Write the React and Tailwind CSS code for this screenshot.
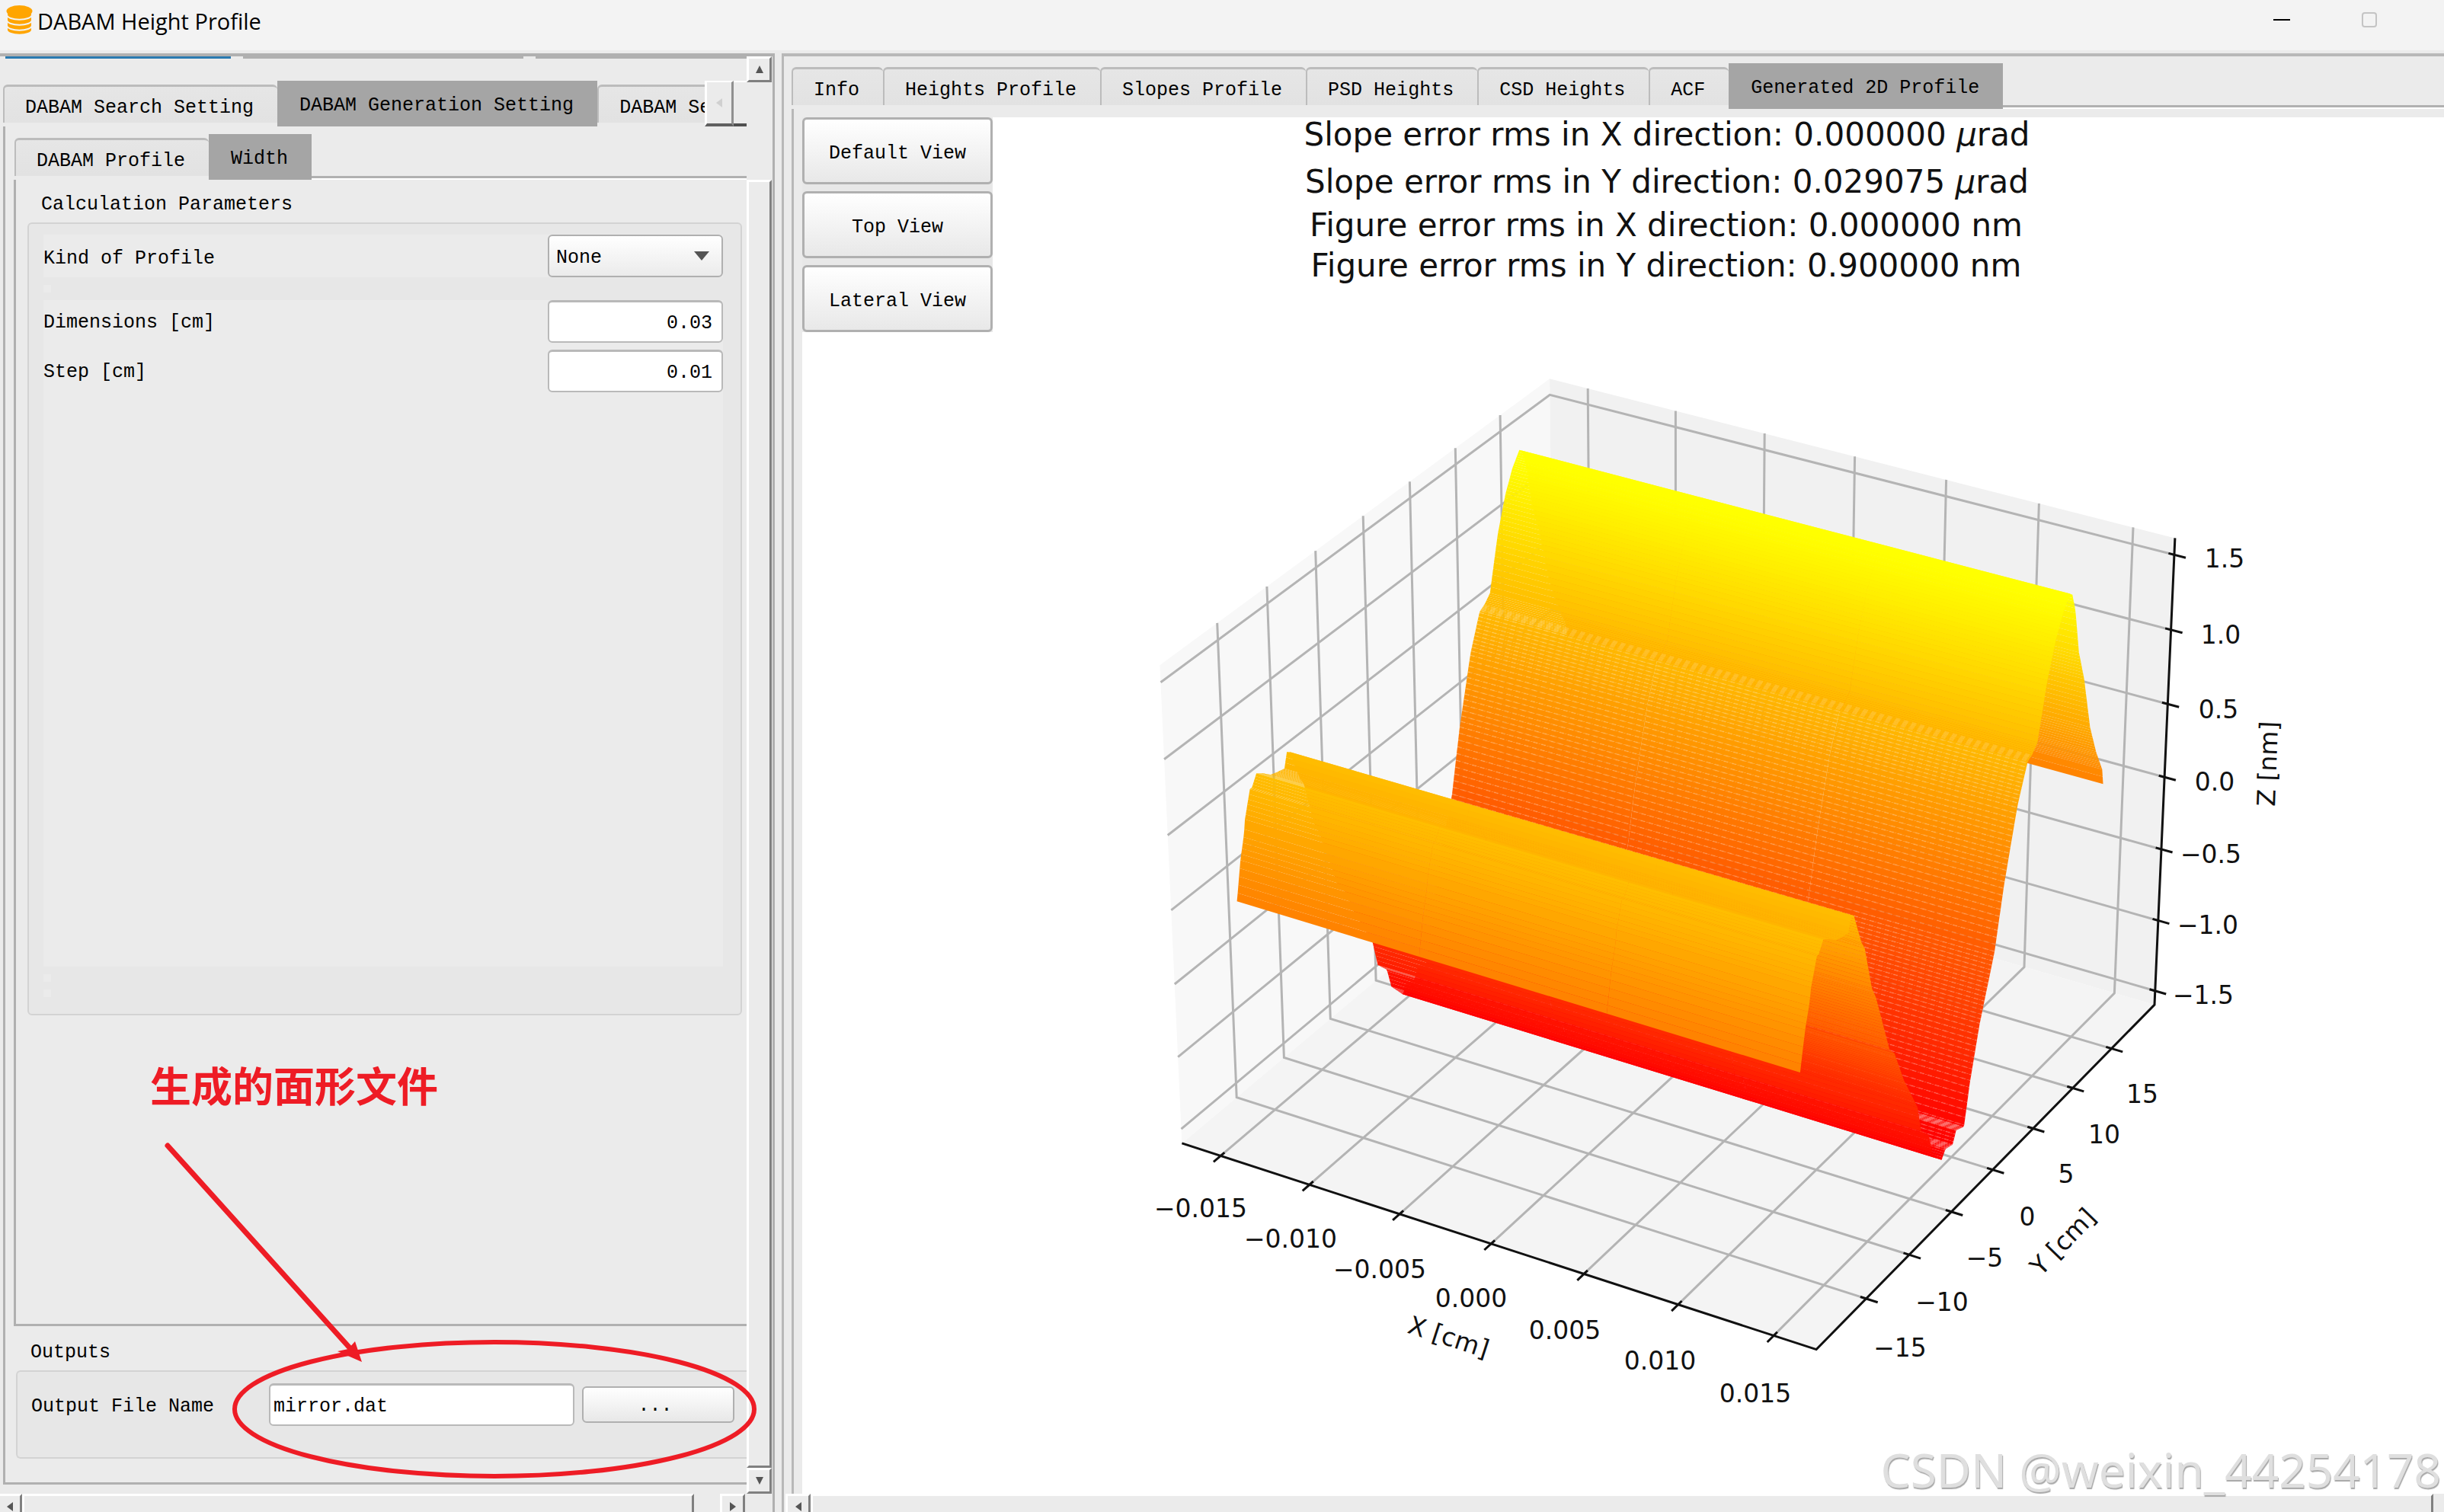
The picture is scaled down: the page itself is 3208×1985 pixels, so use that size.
import { useState } from "react";

const SETTING_TABS = ["DABAM Search Setting", "DABAM Generation Setting"];
const PROFILE_TABS = ["DABAM Profile", "Width"];
const PLOT_TABS = [
  "Info",
  "Heights Profile",
  "Slopes Profile",
  "PSD Heights",
  "CSD Heights",
  "ACF",
  "Generated 2D Profile",
];

// height profile along the mirror: [y in cm, z in nm]
const PROFILE = [
  [-18, 0], [-17.5, 0.25], [-17.05, 0.4], [-16.9, 0.49], [-16.3, 0.66],
  [-16.1, 0.66], [-15.6, 0.73], [-15, 0.7], [-14.2, 0.65], [-13.6, 0.635],
  [-12.8, 0.62], [-12.5, 0.717], [-12.2, 0.7], [-11.3, 0.48], [-10.9, 0.42],
  [-10, 0.11], [-9.5, 0.02], [-7.8, -0.42], [-7.2, -0.48], [-6, -0.73],
  [-5.2, -0.86], [-4.3, -1.01], [-3.8, -1.2], [-2.84, -1.285], [-2.4, -1.43],
  [-1.7, -1.5], [-1.2, -1.55], [-0.76, -1.5], [0.12, -1.52], [0.5, -1.443],
  [1.48, -1.472], [2.07, -1.196], [3.09, -0.85], [4.68, -0.45], [5.66, -0.035],
  [7.03, 0.42], [8.13, 0.657], [8.7, 0.68], [9.3, 0.728], [10.25, 1.08],
  [11.18, 1.313], [12, 1.453], [12.8, 1.54], [13.1, 1.52], [13.55, 1.398],
  [14.2, 1.087], [15, 0.87], [16, 0.497], [16.9, 0.286], [17.8, 0.12], [18, 0.01],
];

// half sizes of the axes box and the data limits it stands for
const BOX = 0.5714;
const BOX_Z = 0.4286;
const X_LIM = 0.0172;
const Y_LIM = 20.65;
const Z_LIM = 1.605;

// camera: elevation 30, azimuth -60, distance 10
const projectBox = (p, q, r) => {
  const depth = 10 - (0.433 * p - 0.75 * q + 0.5 * r);
  const sx = (0.866 * p + 0.5 * q) / depth;
  const sy = (-0.25 * p + 0.433 * q + 0.866 * r) / depth;
  return [2201 + 8350 * sx, 1105 - 8350 * sy];
};

const bx = (x) => (x / X_LIM) * BOX;
const by = (y) => (y / Y_LIM) * BOX;
const bz = (z) => ((z - 0.005) / Z_LIM) * BOX_Z;

const toPoints = (list) =>
  list.map(([x, y]) => `${x.toFixed(1)},${y.toFixed(1)}`).join(" ");

const heightAt = (y) => {
  const i = PROFILE.findIndex((point) => point[0] >= y);
  if (i <= 0) return PROFILE[0][1];
  const [y0, z0] = PROFILE[i - 1];
  const [y1, z1] = PROFILE[i];
  return z0 + ((z1 - z0) * (y - y0)) / (y1 - y0);
};

// back to front, three cells in every strip
const buildSurface = () => {
  const strips = [];
  const xs = [-0.015, -0.005, 0.005, 0.015];
  for (let i = 359; i >= 0; i--) {
    const y0 = -18 + i * 0.1;
    const y1 = y0 + 0.1;
    const z0 = heightAt(y0);
    const z1 = heightAt(Math.min(y1, 18));
    const level = ((z0 + z1) / 2 + 1.53) / 3.03;
    const green = Math.round(255 * Math.min(1, Math.max(0, level)));
    const cells = [0, 1, 2].map((j) =>
      toPoints([
        projectBox(bx(xs[j]), by(y0), bz(z0)),
        projectBox(bx(xs[j + 1]), by(y0), bz(z0)),
        projectBox(bx(xs[j + 1]), by(y1), bz(z1)),
        projectBox(bx(xs[j]), by(y1), bz(z1)),
      ])
    );
    // the seams shine through on the slope that faces the camera
    const seam =
      y0 > -1 && y0 < 8.6
        ? toPoints([
            projectBox(bx(-0.015), by(y1), bz(z1)),
            projectBox(bx(0.015), by(y1), bz(z1)),
          ])
        : null;
    strips.push({ key: i, fill: `rgb(255,${green},0)`, cells, seam });
  }
  return strips;
};

const SURFACE = buildSurface();

const X_TICKS = [
  { value: -0.015, label: "−0.015", x: 1576, y: 1598 },
  { value: -0.01, label: "−0.010", x: 1694, y: 1638 },
  { value: -0.005, label: "−0.005", x: 1811, y: 1678 },
  { value: 0, label: "0.000", x: 1931, y: 1716 },
  { value: 0.005, label: "0.005", x: 2054, y: 1758 },
  { value: 0.01, label: "0.010", x: 2179, y: 1798 },
  { value: 0.015, label: "0.015", x: 2304, y: 1841 },
];
const Y_TICKS = [
  { value: -15, label: "−15", x: 2494, y: 1781 },
  { value: -10, label: "−10", x: 2549, y: 1721 },
  { value: -5, label: "−5", x: 2605, y: 1663 },
  { value: 0, label: "0", x: 2661, y: 1609 },
  { value: 5, label: "5", x: 2712, y: 1553 },
  { value: 10, label: "10", x: 2762, y: 1501 },
  { value: 15, label: "15", x: 2812, y: 1448 },
];
const Z_TICKS = [
  { value: 1.5, label: "1.5", x: 2920, y: 745 },
  { value: 1, label: "1.0", x: 2915, y: 845 },
  { value: 0.5, label: "0.5", x: 2912, y: 943 },
  { value: 0, label: "0.0", x: 2907, y: 1038 },
  { value: -0.5, label: "−0.5", x: 2902, y: 1133 },
  { value: -1, label: "−1.0", x: 2898, y: 1226 },
  { value: -1.5, label: "−1.5", x: 2892, y: 1318 },
];

const A = BOX;
const C = BOX_Z;
const PANES = [
  { fill: "#f8f8f8", corners: [[-A, -A, -C], [-A, A, -C], [-A, A, C], [-A, -A, C]] },
  { fill: "#f1f1f1", corners: [[-A, A, -C], [A, A, -C], [A, A, C], [-A, A, C]] },
  { fill: "#f4f4f4", corners: [[-A, -A, -C], [A, -A, -C], [A, A, -C], [-A, A, -C]] },
];

const GRID = [
  ...X_TICKS.map(({ value }) => [[bx(value), -A, -C], [bx(value), A, -C], [bx(value), A, C]]),
  ...Y_TICKS.map(({ value }) => [[A, by(value), -C], [-A, by(value), -C], [-A, by(value), C]]),
  ...Z_TICKS.map(({ value }) => [[-A, -A, bz(value)], [-A, A, bz(value)], [A, A, bz(value)]]),
];

const AXIS_LINES = [
  [[-A, -A, -C], [A, -A, -C], [A, A, -C], [A, A, C]],
  ...X_TICKS.map(({ value }) => [[bx(value), -A - 0.02, -C], [bx(value), -A + 0.011, -C]]),
  ...Y_TICKS.map(({ value }) => [[A - 0.01, by(value), -C], [A + 0.02, by(value), -C]]),
  ...Z_TICKS.map(({ value }) => [[A - 0.01, A, bz(value)], [A + 0.02, A, bz(value)]]),
];

const linePoints = (line) => toPoints(line.map((corner) => projectBox(...corner)));

function ProfilePlot() {
  return (
    <svg
      viewBox="1303 154 1905 1807"
      className="h-full w-full overflow-visible font-['DejaVu_Sans',sans-serif]"
      role="img"
      aria-label="Generated 2D Profile"
    >
      <g fontSize="42" textAnchor="middle" fill="#111">
        <text x="2188" y="191">
          Slope error rms in X direction: 0.000000 <tspan fontStyle="italic">μ</tspan>rad
        </text>
        <text x="2188" y="253">
          Slope error rms in Y direction: 0.029075 <tspan fontStyle="italic">μ</tspan>rad
        </text>
        <text x="2187" y="310">Figure error rms in X direction: 0.000000 nm</text>
        <text x="2187" y="363">Figure error rms in Y direction: 0.900000 nm</text>
      </g>
      {PANES.map(({ fill, corners }) => (
        <polygon key={fill} points={linePoints(corners)} fill={fill} />
      ))}
      <g fill="none" stroke="#b4b4b4" strokeWidth="3">
        {GRID.map((line, i) => (
          <polyline key={i} points={linePoints(line)} />
        ))}
      </g>
      <g fill="none" stroke="#111" strokeWidth="3">
        {AXIS_LINES.map((line, i) => (
          <polyline key={i} points={linePoints(line)} />
        ))}
      </g>
      {SURFACE.map(({ key, fill, cells, seam }) => (
        <g key={key}>
          {cells.map((points) => (
            <polygon key={points} points={points} fill={fill} />
          ))}
          {seam && (
            <polyline
              points={seam}
              fill="none"
              stroke="#fff"
              strokeOpacity="0.15"
              strokeWidth="2"
              strokeDasharray="6 5"
            />
          )}
        </g>
      ))}
      <g fontSize="33" textAnchor="middle" fill="#111">
        {[...X_TICKS, ...Y_TICKS, ...Z_TICKS].map(({ label, x, y }) => (
          <text key={`${x}-${y}`} x={x} y={y}>
            {label}
          </text>
        ))}
        <text transform="translate(1898 1766) rotate(18)">X [cm]</text>
        <text transform="translate(2716 1638) rotate(-46)">Y [cm]</text>
        <text transform="translate(2988 1003) rotate(-88)">Z [nm]</text>
      </g>
    </svg>
  );
}

function Tab({ label, active, onClick }) {
  return (
    <button
      type="button"
      role="tab"
      aria-selected={active}
      onClick={onClick}
      className={
        active
          ? "flex h-[60px] shrink-0 items-start bg-[#a5a5a5] pt-[18px] pr-[31px] pl-[29px] whitespace-nowrap"
          : "mt-[5px] flex h-[50px] shrink-0 items-start rounded-t-md border-t-3 border-l-2 border-[#bcbcbc] bg-linear-to-b from-[#e6e6e6] to-[#e2e2e2] pr-[31px] pl-[27px] pt-[13px] whitespace-nowrap"
      }
    >
      {label}
    </button>
  );
}

function Arrow({ direction }) {
  const shapes = {
    up: "M6 1 L11 11 L1 11 Z",
    down: "M1 1 L11 1 L6 11 Z",
    left: "M10 0 L10 12 L2 6 Z",
    right: "M2 0 L2 12 L10 6 Z",
  };
  return (
    <svg viewBox="0 0 12 12" className="h-3 w-3 fill-current" aria-hidden="true">
      <path d={shapes[direction]} />
    </svg>
  );
}

function ScrollButton({ direction }) {
  return (
    <button
      type="button"
      aria-label={`Scroll ${direction}`}
      className="flex h-[34px] w-[33px] shrink-0 items-center justify-center border-t-3 border-r-3 border-b-3 border-l-3 border-t-white border-r-[#808080] border-b-[#808080] border-l-white bg-[#ebebeb] text-[#555]"
    >
      <Arrow direction={direction} />
    </button>
  );
}

function NumberRow({ id, label, value, onChange }) {
  return (
    <div className="flex items-end justify-between">
      <label htmlFor={id} className="pb-[11px]">
        {label}
      </label>
      <input
        id={id}
        value={value}
        onChange={(e) => onChange(e.target.value)}
        className="h-14 w-[230px] rounded-md border-2 border-t-3 border-[#b9b9b9] bg-white px-3 pt-[3px] text-right"
      />
    </div>
  );
}

// red marker drawn over the output file row
function Annotation() {
  return (
    <div className="pointer-events-none absolute bottom-0 left-[190px] text-[#ee1c25]">
      <p className="pb-[6px] pl-[7px] font-['Noto_Sans_CJK_SC',sans-serif] text-[54px] leading-[80px] font-bold">
        生成的面形文件
      </p>
      <svg viewBox="190 1470 820 491" className="h-[491px] w-[820px]" aria-hidden="true">
        <path d="M220 1504 L464 1775" stroke="currentColor" strokeWidth="7" strokeLinecap="round" />
        <path d="M475 1788 L443 1774 L457 1771 L466 1761 Z" fill="currentColor" />
        <ellipse cx="649" cy="1850" rx="341" ry="88" fill="none" stroke="currentColor" strokeWidth="6" />
      </svg>
    </div>
  );
}

function SettingsPanel() {
  const [tab, setTab] = useState(SETTING_TABS[1]);
  const [profileTab, setProfileTab] = useState("Width");
  const [kind, setKind] = useState("None");
  const [dimensions, setDimensions] = useState("0.03");
  const [step, setStep] = useState("0.01");
  const [fileName, setFileName] = useState("mirror.dat");

  return (
    <aside className="flex w-[1017px] shrink-0 flex-col border-t-4 border-r-3 border-[#b0b0b0]">
      <div className="relative flex min-h-0 flex-1">
        <div className="flex w-[980px] flex-col">
          <div className="flex h-[3px] gap-4 pl-[7px]">
            <div className="w-[296px] bg-[#2a7ab0]" />
            <div className="w-[368px] bg-[#b0b0b0]" />
            <div className="flex-1 bg-[#b0b0b0]" />
          </div>
          <div role="tablist" className="mt-[29px] ml-[4px] flex overflow-hidden">
            {SETTING_TABS.map((name) => (
              <Tab key={name} label={name} active={tab === name} onClick={() => setTab(name)} />
            ))}
            <div className="w-[141px] overflow-hidden">
              <Tab label="DABAM Setting" active={false} />
            </div>
            <button
              type="button"
              aria-label="Previous tabs"
              className="flex h-[60px] w-[38px] items-center justify-center border-t-2 border-r-3 border-b-4 border-l-3 border-t-white border-r-[#909090] border-b-[#606060] border-l-white text-[#d0d0d0]"
            >
              <Arrow direction="left" />
            </button>
            <div className="h-[60px] flex-1 border-t-2 border-b-4 border-t-white border-b-[#505050]" />
          </div>

          <div className="mb-3 ml-[4px] flex min-h-0 flex-1 flex-col border-b-3 border-l-3 border-[#b0b0b0]">
            <div role="tablist" className="mt-[10px] ml-[12px] flex">
              {PROFILE_TABS.map((name) => (
                <Tab
                  key={name}
                  label={name}
                  active={profileTab === name}
                  onClick={() => setProfileTab(name)}
                />
              ))}
              <div className="h-[5px] flex-1 self-end border-t-3 border-b-2 border-t-[#b0b0b0] border-b-white" />
            </div>

            <div className="ml-[11px] flex min-h-0 flex-1 flex-col border-b-3 border-l-3 border-[#b0b0b0] pr-[6px] pl-[15px]">
              <h2 className="mt-[18px] ml-[18px]">Calculation Parameters</h2>
              <div
                role="group"
                aria-label="Calculation Parameters"
                className="mt-2 flex min-h-[1041px] flex-col rounded-md border-2 border-[#d3d3d3] bg-[#e7e7e7] pt-[14px] pr-[23px] pb-[22px] pl-[19px]"
              >
                <div className="flex items-end justify-between bg-[#ebebeb]">
                  <label htmlFor="kind" className="pb-[9px]">
                    Kind of Profile
                  </label>
                  <div className="relative">
                    <select
                      id="kind"
                      value={kind}
                      onChange={(e) => setKind(e.target.value)}
                      className="h-14 w-[230px] appearance-none rounded-md border-2 border-[#b0b0b0] bg-linear-to-b from-white to-[#ebebeb] px-[9px] pt-[6px]"
                    >
                      <option>None</option>
                      <option>Gaussian</option>
                      <option>Fractal</option>
                    </select>
                    <svg
                      viewBox="0 0 20 12"
                      className="pointer-events-none absolute top-[22px] right-[18px] h-3 w-5"
                      aria-hidden="true"
                    >
                      <path d="M0 0 H20 L10 12 Z" fill="#555" />
                    </svg>
                  </div>
                </div>
                <div className="my-[10px] h-[10px] w-[10px] bg-[#ebebeb]" />
                <div className="flex flex-1 flex-col gap-[9px] bg-[#ebebeb]">
                  <NumberRow
                    id="dimensions"
                    label="Dimensions [cm]"
                    value={dimensions}
                    onChange={setDimensions}
                  />
                  <NumberRow id="step" label="Step [cm]" value={step} onChange={setStep} />
                </div>
                <div className="mt-[10px] h-[10px] w-[10px] bg-[#ebebeb]" />
                <div className="mt-[10px] h-[10px] w-[10px] bg-[#ebebeb]" />
              </div>
            </div>

            <h2 className="mt-[20px] ml-[33px]">Outputs</h2>
            <div
              role="group"
              aria-label="Outputs"
              className="mt-2 mb-[31px] ml-[14px] flex h-[116px] items-start rounded-l-md border-2 border-r-0 border-[#d3d3d3] bg-[#e7e7e7] pt-[15px] pr-[16px] pl-[18px]"
            >
              <label htmlFor="file-name" className="w-[312px] pt-4">
                Output File Name
              </label>
              <input
                id="file-name"
                value={fileName}
                onChange={(e) => setFileName(e.target.value)}
                className="h-14 min-w-0 flex-1 rounded-md border-2 border-t-3 border-[#b9b9b9] bg-white px-[4px] pt-[3px]"
              />
              <button
                type="button"
                aria-label="Choose output file"
                className="mt-1 ml-[10px] h-12 w-[200px] rounded-md border-2 border-[#b0b0b0] bg-linear-to-b from-white to-[#e8e8e8] pt-1 pr-2"
              >
                ...
              </button>
            </div>
          </div>
        </div>

        <div className="flex w-[33px] flex-col">
          <ScrollButton direction="up" />
          <div className="h-[128px]" />
          <div className="flex-1 border-t-3 border-r-3 border-b-3 border-l-3 border-t-white border-r-[#808080] border-b-[#808080] border-l-white" />
          <ScrollButton direction="down" />
        </div>
        <Annotation />
      </div>

      <div className="flex h-6 overflow-hidden">
        <div className="-ml-1">
          <ScrollButton direction="left" />
        </div>
        <div className="h-[34px] flex-1 border-t-3 border-r-3 border-l-3 border-t-white border-r-[#808080] border-l-white" />
        <div className="mr-[36px] ml-[34px]">
          <ScrollButton direction="right" />
        </div>
      </div>
    </aside>
  );
}

function PlotPanel() {
  const [tab, setTab] = useState("Generated 2D Profile");
  const views = ["Default View", "Top View", "Lateral View"];

  return (
    <main className="ml-[9px] flex min-w-0 flex-1 flex-col border-t-4 border-l-3 border-[#b8b8b8]">
      <div role="tablist" className="mt-[9px] ml-[10px] flex">
        {PLOT_TABS.map((name) => (
          <Tab key={name} label={name} active={tab === name} onClick={() => setTab(name)} />
        ))}
        <div className="h-[5px] flex-1 self-end border-t-3 border-b-2 border-t-[#b0b0b0] border-b-white" />
      </div>
      <section className="ml-[10px] flex min-h-0 flex-1 border-l-3 border-[#b8b8b8] pt-[11px] pl-[11px]">
        <div className="flex min-w-0 flex-1 bg-white">
          <div className="flex w-[250px] shrink-0 flex-col gap-[9px] self-start bg-[#e8e8e8]">
            {views.map((view) => (
              <button
                key={view}
                type="button"
                className="h-[88px] rounded-md border-3 border-[#b0b0b0] bg-linear-to-b from-white to-[#e8e8e8] pt-2"
              >
                {view}
              </button>
            ))}
          </div>
          <div className="min-h-0 min-w-0 flex-1">
            <ProfilePlot />
          </div>
        </div>
      </section>
      <div className="ml-[2px] flex h-6 overflow-hidden">
        <ScrollButton direction="left" />
        <div className="mr-[14px] h-[34px] flex-1 border-t-3 border-r-3 border-l-3 border-t-white border-r-[#808080] border-l-white" />
      </div>
    </main>
  );
}

function TitleBar() {
  return (
    <header className="flex h-[66px] shrink-0 items-start justify-between bg-[#f3f3f3]">
      <div className="flex items-start pt-[7px] pl-2">
        <svg viewBox="0 0 35 39" className="h-[39px] w-[35px]" aria-hidden="true">
          <g fill="#ffa500" stroke="#f3f3f3" strokeWidth="2">
            <path d="M1 27 V32 C1 41 34 41 34 32 V27 Z" />
            <path d="M1 20 V26 C1 35 34 35 34 26 V20 Z" />
            <path d="M1 13 V19 C1 28 34 28 34 19 V13 Z" />
            <path d="M1 7 V12 C1 21 34 21 34 12 V7 Z" />
            <ellipse cx="17.5" cy="7.5" rx="17" ry="7.5" strokeWidth="0" />
          </g>
        </svg>
        <h1 className="ml-[6px] font-['Open_Sans',sans-serif] text-[29px] leading-[42px]">
          DABAM Height Profile
        </h1>
      </div>
      <div className="flex gap-[94px] pt-4 pr-[88px]">
        <button type="button" aria-label="Minimize" className="flex h-5 w-[22px] items-center">
          <span className="h-[2px] w-full bg-black" />
        </button>
        <button
          type="button"
          aria-label="Maximize"
          className="h-5 w-5 rounded-sm border-2 border-[#c4c4c4]"
        />
      </div>
    </header>
  );
}

export default function App() {
  return (
    <div className="relative flex h-screen flex-col overflow-hidden bg-[#ebebeb] font-['Liberation_Mono','Noto_Sans_CJK_SC',monospace] text-[25px] leading-[30px] text-black">
      <TitleBar />
      <div className="flex min-h-0 flex-1 pt-1">
        <SettingsPanel />
        <PlotPanel />
      </div>
      <p className="pointer-events-none absolute right-1 bottom-4 font-['Noto_Sans',sans-serif] text-[62px] leading-[80px] text-[#dfdfdf] [text-shadow:1px_2px_1px_#a8a8a8]">
        CSDN @weixin_44254178
      </p>
    </div>
  );
}
